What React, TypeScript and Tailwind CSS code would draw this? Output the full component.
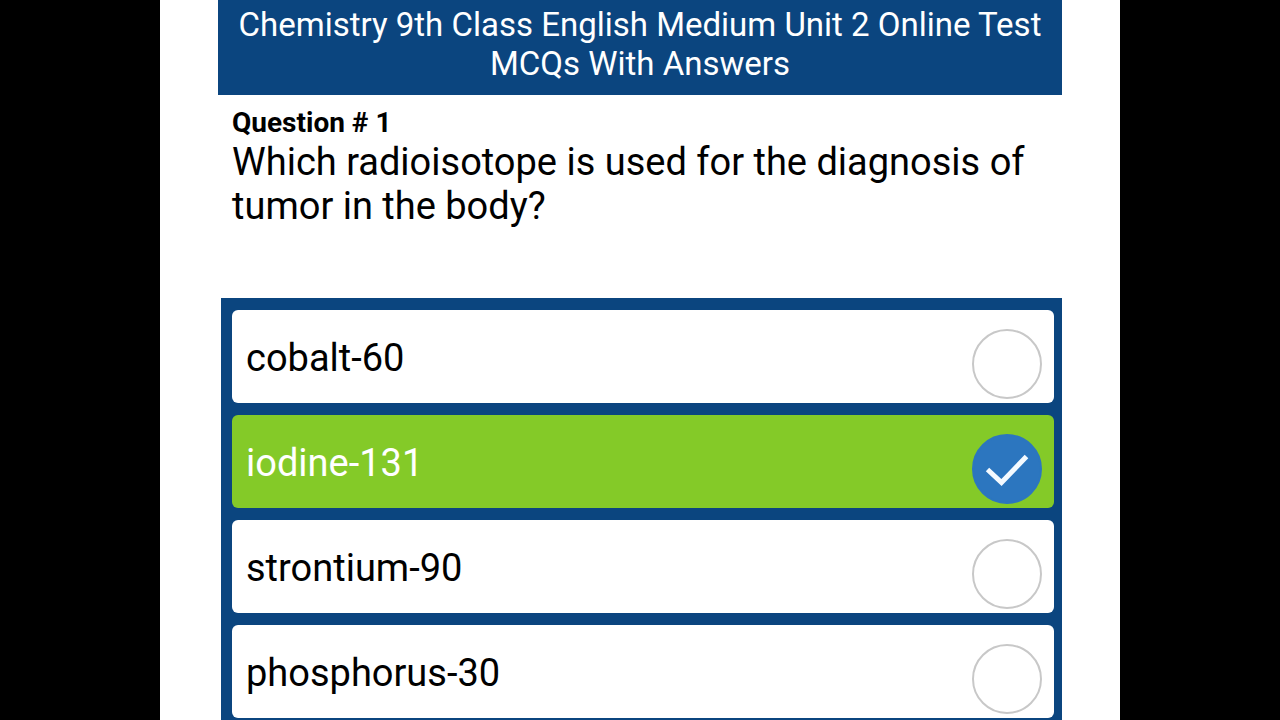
const question = {
  number: 1,
  text: "Which radioisotope is used for the diagnosis of tumor in the body?",
  answer: "iodine-131",
  options: ["cobalt-60", "iodine-131", "strontium-90", "phosphorus-30"],
}

function Option({ label }: { label: string }) {
  return (
    <label className="flex h-[93px] items-start justify-between rounded-md bg-white pl-[14px] pr-3 text-black has-checked:bg-[#84ca28] has-checked:text-white">
      <span className="pt-[26px] text-[38px] leading-[44px]">{label}</span>
      <span className="mt-[19px] grid size-[70px] shrink-0">
        <input
          type="radio"
          name="answer"
          value={label}
          defaultChecked={label === question.answer}
          className="peer col-start-1 row-start-1 size-[70px] appearance-none rounded-full border-2 border-[#c8c8c8] bg-white checked:border-[#2c76bf] checked:bg-[#2c76bf]"
        />
        <svg
          viewBox="0 0 70 70"
          className="pointer-events-none invisible col-start-1 row-start-1 size-[70px] peer-checked:visible"
          fill="none"
          stroke="#f4faff"
          strokeWidth="5"
        >
          <path d="M15.5 35.5L29.5 48.5L54.5 22.5" />
        </svg>
      </span>
    </label>
  )
}

export default function App() {
  return (
    <div className="flex h-screen justify-center overflow-hidden bg-black font-['Roboto',sans-serif]">
      <main className="w-3/4 bg-white px-[58px]">
        <header className="bg-[#0b457f] px-4 pb-3 pt-[5px] text-center text-white">
          <h1 className="text-[33px] leading-[39px]">
            Chemistry 9th Class English Medium Unit 2 Online Test MCQs With Answers
          </h1>
        </header>

        <section className="h-[203px] px-[14px] pt-[11px]">
          <h2 className="text-[28px] font-bold leading-[34px]">Question # {question.number}</h2>
          <p className="text-[38px] leading-[44px]">{question.text}</p>
        </section>

        <form className="ml-[3px] flex flex-col gap-3 bg-[#0b457f] py-3 pl-[11px] pr-2">
          {question.options.map((option) => (
            <Option key={option} label={option} />
          ))}
        </form>
      </main>
    </div>
  )
}
